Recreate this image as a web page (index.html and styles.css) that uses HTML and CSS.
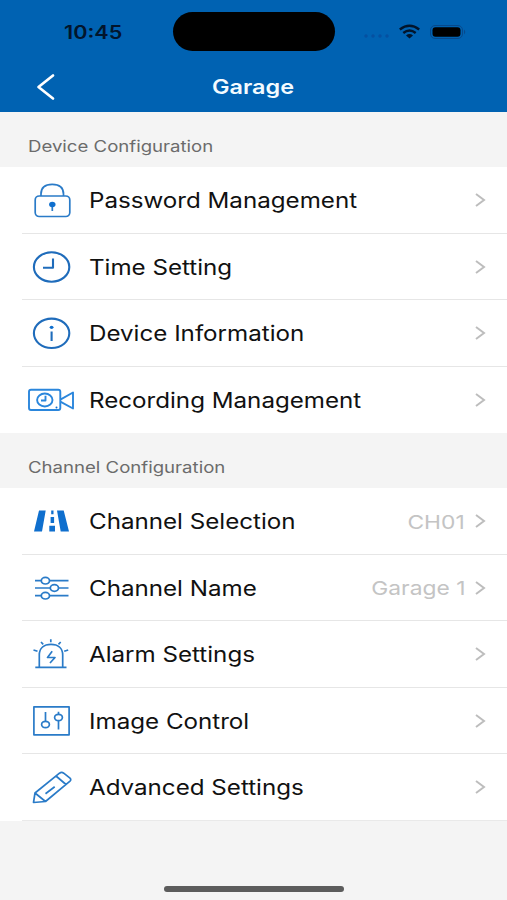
FILE: index.html
```html
<!DOCTYPE html>
<html lang="en">
<head>
<meta charset="utf-8">
<meta name="viewport" content="width=device-width, initial-scale=1">
<title>Garage</title>
<link rel="stylesheet" href="styles.css">
</head>
<body>
<header class="top">
  <div class="status">
    <div class="clock"><span class="wide">10:45</span></div>
    <div class="island"></div>
    <svg class="signals" width="106" height="24" viewBox="0 0 106 24">
      <g fill="#0550a0"><circle cx="5" cy="16" r="1.7"/><circle cx="12" cy="16" r="1.7"/><circle cx="19" cy="16" r="1.7"/><circle cx="26" cy="16" r="1.7"/></g>
      <g fill="none" stroke="#02152c" stroke-width="2.5"><path d="M38.800 9.400Q48.500 2.200 58.200 9.400"/><path d="M42.300 12.900Q48.500 8.200 54.700 12.900"/></g>
      <path d="M45 15.400Q48.500 12.600 52 15.400L48.500 18.500Z" fill="#02152c"/>
      <rect x="69.500" y="5.500" width="32" height="13" rx="4.500" fill="none" stroke="#07498c"/>
      <rect x="71.500" y="7.300" width="28" height="9.400" rx="3" fill="#000"/>
      <path d="M103 9.500v5q2.500-2.500 0-5" fill="#07498c"/>
    </svg>
  </div>
  <nav class="nav">
    <svg class="back" width="20" height="28" viewBox="0 0 20 28"><path d="M17 2.500L2.500 14L17 25.500" fill="none" stroke="#fff" stroke-width="2.700" stroke-linecap="round" stroke-linejoin="round"/></svg>
    <h1 class="title"><span class="wide">Garage</span></h1>
  </nav>
</header>
<main>
  <h2 class="section"><span class="wide">Device Configuration</span></h2>
  <ul class="list">
    <li class="row">
      <svg class="icon" viewBox="0 0 56 50"><rect x="11.200" y="21" width="34.600" height="20.500" rx="4"/><path d="M17 21v-2C17 12.500 21.500 9.300 28.200 9.300S39.500 12.500 39.500 19v2M28.300 30v6"/><ellipse class="solid" cx="28.300" cy="29.500" rx="3.200" ry="2.800"/></svg>
      <span class="label"><span class="wide">Password Management</span></span>
      <svg class="chevron" viewBox="0 0 12 16"><path d="M2 2L10 8L2 14"/></svg>
    </li>
    <li class="row">
      <svg class="icon bold" viewBox="0 0 56 50"><ellipse cx="27.600" cy="25" rx="17.700" ry="14.700"/><path d="M29 16.500V25.800H19"/></svg>
      <span class="label"><span class="wide">Time Setting</span></span>
      <svg class="chevron" viewBox="0 0 12 16"><path d="M2 2L10 8L2 14"/></svg>
    </li>
    <li class="row">
      <svg class="icon bold" viewBox="0 0 56 50"><ellipse cx="27.600" cy="25.300" rx="17.700" ry="14.700"/><path d="M27.600 23.500V33"/><ellipse class="solid" cx="27.600" cy="19.300" rx="1.900" ry="1.600"/></svg>
      <span class="label"><span class="wide">Device Information</span></span>
      <svg class="chevron" viewBox="0 0 12 16"><path d="M2 2L10 8L2 14"/></svg>
    </li>
    <li class="row">
      <svg class="icon camera" viewBox="0 0 56 50"><rect x="5" y="14.800" width="31.300" height="20.200" rx="2"/><path d="M36.300 24.700L49 17.500V33.500L36.300 26.700"/><ellipse cx="20.800" cy="25" rx="7.700" ry="6.500"/><path d="M21.500 20.700V25.500H17"/><circle class="solid" cx="32.500" cy="32.500" r="1"/></svg>
      <span class="label"><span class="wide">Recording Management</span></span>
      <svg class="chevron" viewBox="0 0 12 16"><path d="M2 2L10 8L2 14"/></svg>
    </li>
  </ul>
  <h2 class="section"><span class="wide">Channel Configuration</span></h2>
  <ul class="list closed">
    <li class="row">
      <svg class="icon" viewBox="0 0 56 50"><path class="solid" d="M15 14.500H21.700L18 35.500H10ZM33 14.500H39.700L45 35.500H36.700ZM27.200 14.500h2.300v3.700h-2.300ZM26.600 21h3.500v6h-3.500ZM25.300 29.700H31v5.800h-5.700Z"/></svg>
      <span class="label"><span class="wide">Channel Selection</span></span>
      <span class="value"><span class="wide">CH01</span></span>
      <svg class="chevron" viewBox="0 0 12 16"><path d="M2 2L10 8L2 14"/></svg>
    </li>
    <li class="row">
      <svg class="icon" viewBox="0 0 56 50"><path d="M11 17.700h6.500M25.500 17.700H44.500M11 25h15M34.500 25h10M11 32.700h6.500M25.500 32.700H44.500"/><ellipse cx="21.400" cy="17.700" rx="4.100" ry="3.300"/><ellipse cx="30.400" cy="25" rx="4.100" ry="3.300"/><ellipse cx="21.400" cy="32.700" rx="4.100" ry="3.300"/></svg>
      <span class="label"><span class="wide">Channel Name</span></span>
      <span class="value"><span class="wide">Garage 1</span></span>
      <svg class="chevron" viewBox="0 0 12 16"><path d="M2 2L10 8L2 14"/></svg>
    </li>
    <li class="row">
      <svg class="icon" viewBox="0 0 56 50"><path d="M11.300 38.300H42.500M15.300 38V26C15.300 19 20 15.300 27 15.300S38.700 19 38.700 26V38M26.800 10.300v2.900M17 13l2.200 2.300M36.700 13l-2.200 2.300M9.500 21l4 1.300M44.200 21l-4 1.300M28.200 22.300L23.500 28.500H31L26 34"/></svg>
      <span class="label"><span class="wide">Alarm Settings</span></span>
      <svg class="chevron" viewBox="0 0 12 16"><path d="M2 2L10 8L2 14"/></svg>
    </li>
    <li class="row">
      <svg class="icon" viewBox="0 0 56 50"><rect x="9.900" y="10.800" width="35.200" height="28"/><path d="M21.500 15.900V25.300M34.500 24.700V33.600M34.500 15.700V18.300"/><ellipse cx="21.500" cy="28.500" rx="3.900" ry="3.200"/><ellipse cx="34.500" cy="21.500" rx="3.900" ry="3.200"/></svg>
      <span class="label"><span class="wide">Image Control</span></span>
      <svg class="chevron" viewBox="0 0 12 16"><path d="M2 2L10 8L2 14"/></svg>
    </li>
    <li class="row">
      <svg class="icon" viewBox="0 0 56 50"><path d="M9.500 40.500L11 31L35.500 11.200Q37.700 9.700 39.700 11.200L46 16.200Q47.500 17.800 46 19.200L21.500 39.500ZM11 31L21.500 39.500M32 14L42 22.500M21.500 31.700L30.700 24.700"/></svg>
      <span class="label"><span class="wide">Advanced Settings</span></span>
      <svg class="chevron" viewBox="0 0 12 16"><path d="M2 2L10 8L2 14"/></svg>
    </li>
  </ul>
</main>
<footer class="footer"><div class="home"></div></footer>
</body>
</html>
```
FILE: styles.css
```css
* { box-sizing: border-box; }
body {
  margin: 0;
  height: 900px;
  display: flex;
  flex-direction: column;
  overflow: hidden;
  background: #f4f4f4;
  color: #111;
  font-family: Inter, "Liberation Sans", sans-serif;
}
h1, h2, ul { margin: 0; padding: 0; font-weight: 400; list-style: none; }
.wide {
  display: inline-block;
  white-space: nowrap;
  transform: scaleX(1.2);
  transform-origin: left center;
}
.top { height: 112px; background: #0062b2; }
.status {
  height: 63px;
  display: grid;
  grid-template-columns: 173px 162px 1fr;
  align-items: center;
}
.clock { padding: 1px 0 0 64px; color: #02152c; font-size: 18px; font-weight: 600; }
.island { height: 39px; border-radius: 20px; background: #000; }
.signals { margin-left: 26px; }
.nav {
  height: 48px;
  display: grid;
  grid-template-columns: 1fr auto 1fr;
  align-items: center;
}
.back { margin-left: 36px; }
.title { color: #f3fbff; font-size: 20px; font-weight: 600; line-height: 24px; }
.title .wide { transform: scaleX(1.17); transform-origin: center; }
.section {
  height: 55px;
  padding: 25px 28px 0;
  color: #6b6b6b;
  font-size: 15.500px;
  line-height: 20px;
}
.list { background: #fff; }
.row {
  height: 66.500px;
  margin-left: 22px;
  padding: 1px 21px 0 2px;
  display: flex;
  align-items: center;
  border-bottom: 1px solid #e6e6e6;
}
.row:last-child { border-bottom-color: transparent; }
.closed .row:last-child { border-bottom-color: #e9e9e9; }
.icon {
  flex: none;
  width: 56px;
  height: 50px;
  fill: none;
  stroke: #2a7bc8;
  stroke-width: 1.700;
  stroke-linejoin: round;
}
.bold { stroke: #1f6cbb; stroke-width: 2.100; }
.camera { stroke: #2a86dc; stroke-width: 1.900; }
.icon .solid { fill: #0f6fce; stroke: none; }
.label { flex: 1; margin-left: 9px; padding-top: 2px; font-size: 21px; line-height: 28px; }
.label .wide { transform: scaleX(1.15); }
.value { margin-right: 9px; padding-top: 2px; color: #c4c4c4; font-size: 19px; }
.value .wide { transform-origin: right center; }
.chevron {
  flex: none;
  width: 12px;
  height: 16px;
  fill: none;
  stroke: #bdbdbd;
  stroke-width: 2;
}
.footer {
  flex: 1;
  display: flex;
  align-items: flex-end;
  padding: 0 0 8px 164px;
}
.home { width: 180px; height: 6px; border-radius: 3px; background: #5c5c5c; }
```
